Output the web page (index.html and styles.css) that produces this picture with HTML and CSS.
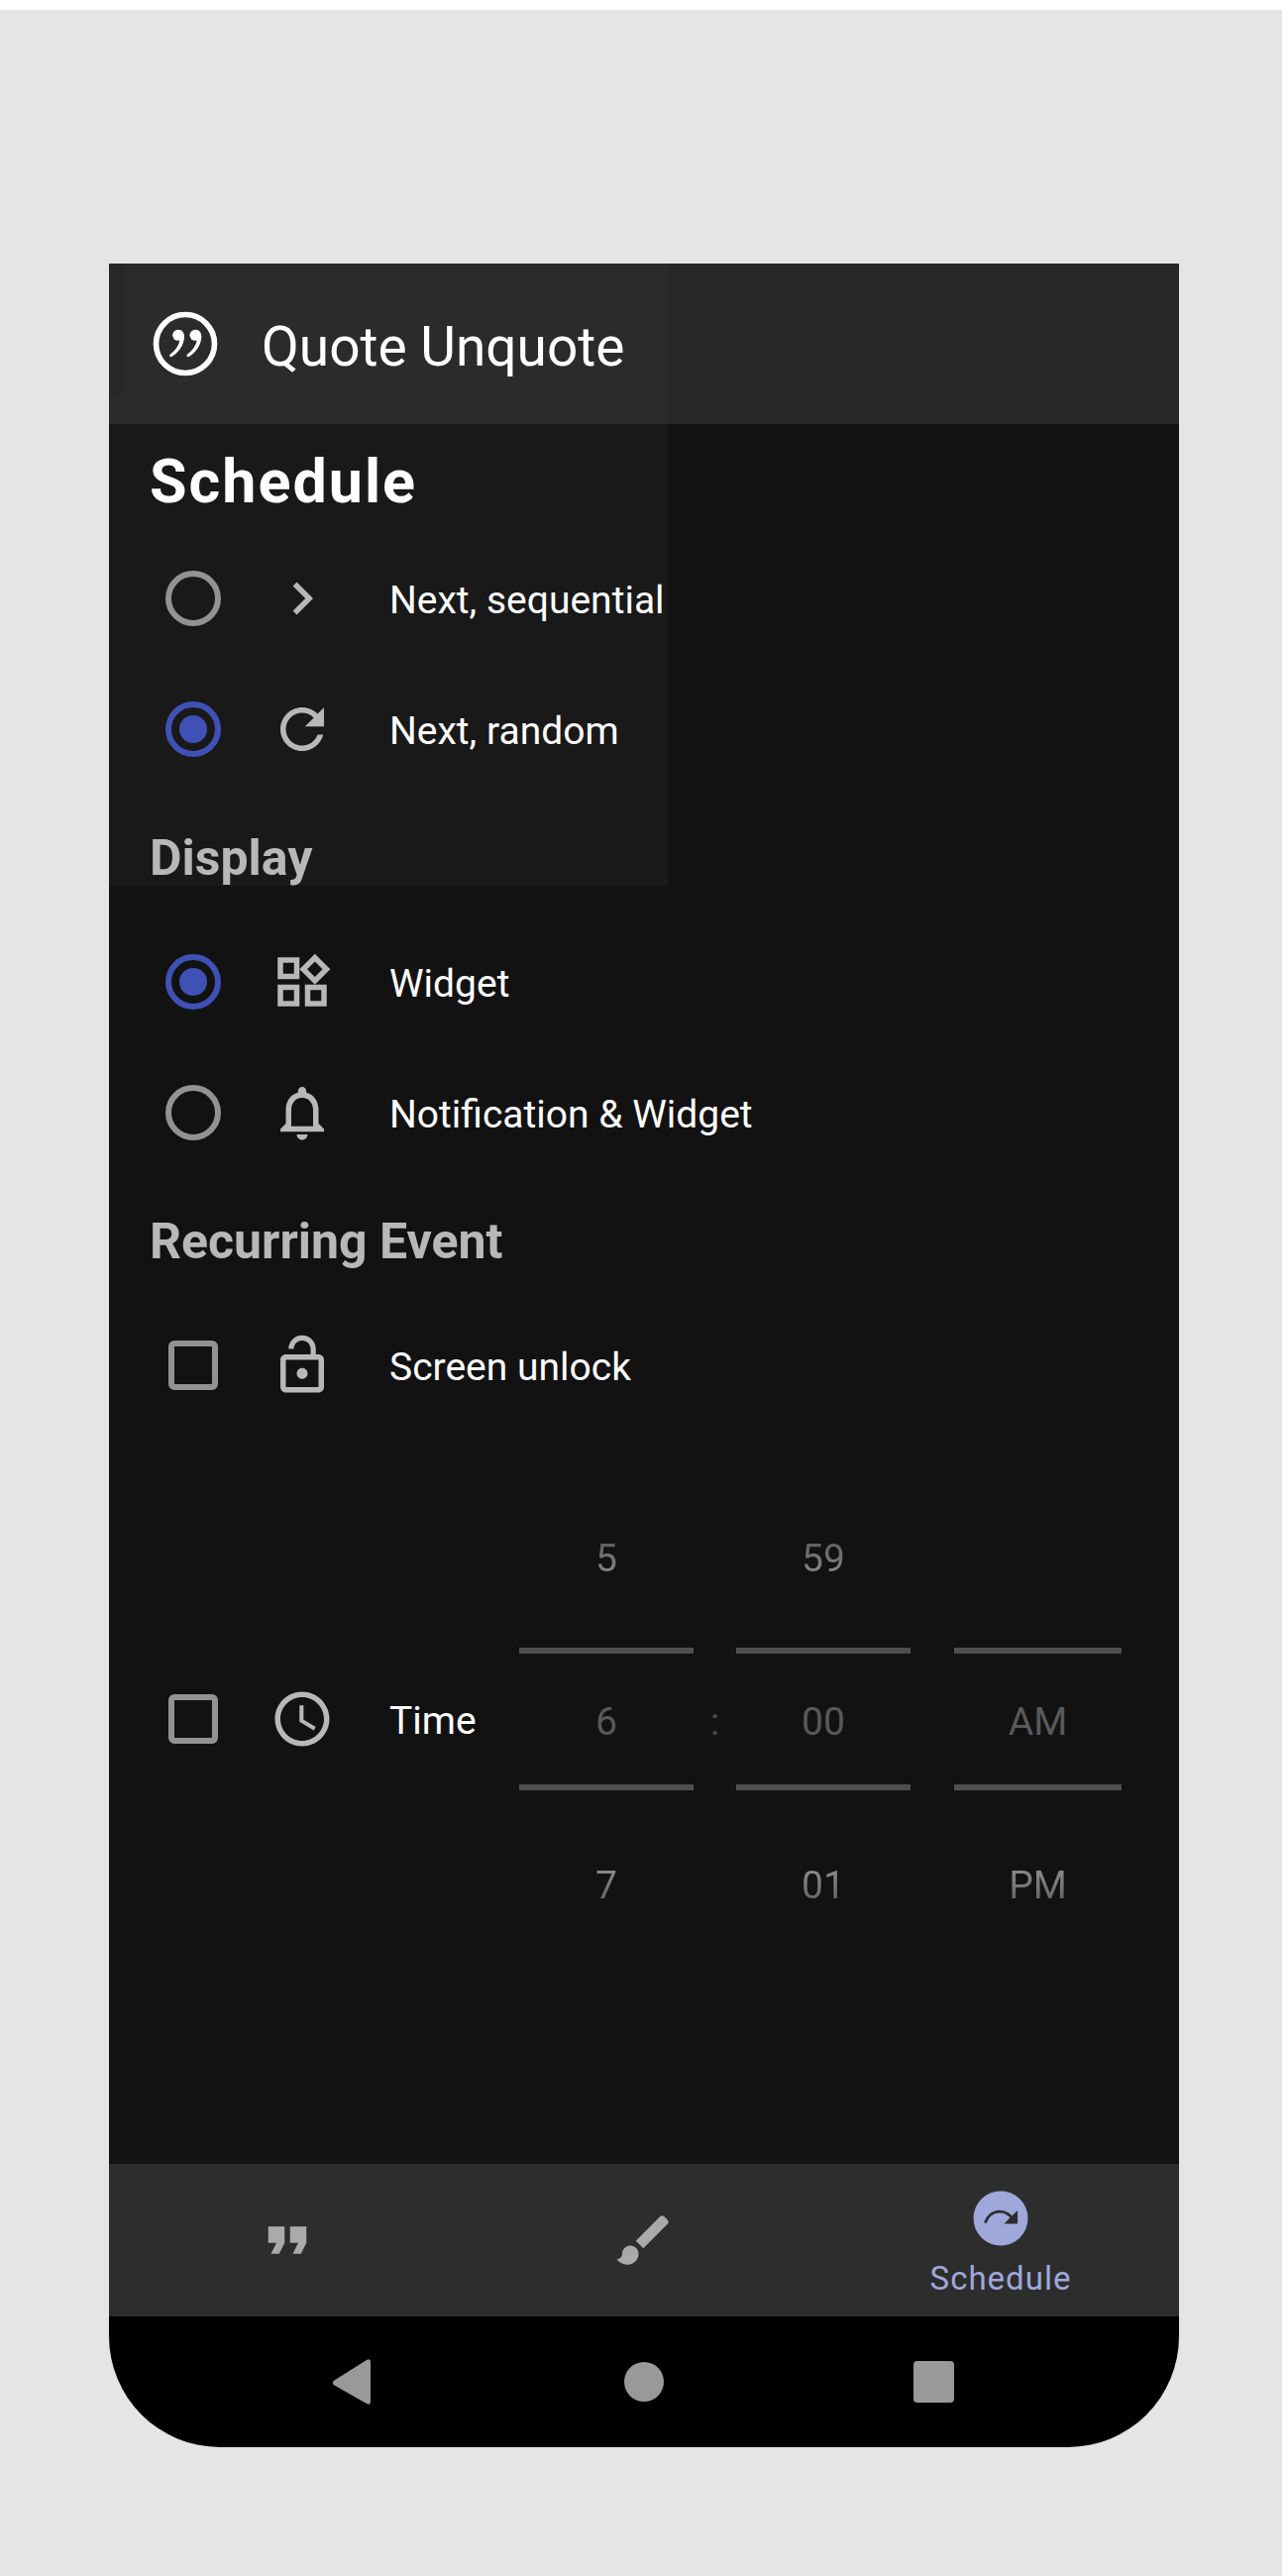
FILE: index.html
```html
<!DOCTYPE html>
<html lang="en">
<head>
<meta charset="utf-8">
<meta name="viewport" content="width=device-width, initial-scale=1">
<title>Quote Unquote</title>
<link rel="stylesheet" href="styles.css">
</head>
<body>
<div class="stage">
  <div class="phone">
    <header class="appbar">
      <svg class="logo" viewBox="42 42 198 198" aria-hidden="true">
        <circle cx="141" cy="141" r="88.500" fill="none" stroke="currentColor" stroke-width="17"/>
        <g id="comma" fill="currentColor">
          <circle cx="119" cy="115" r="16.500"/>
          <path d="M119 98.500C131 98.500 138 107 138 119C138 145 119 169 100 180C95 182 91 177 95 173C111 161 122 146 124 130Z"/>
        </g>
        <use href="#comma" x="52"/>
      </svg>
      <h1 class="title">Quote Unquote</h1>
    </header>

    <main class="content">
      <h2 class="heading">Schedule</h2>
      <label class="row">
        <input class="radio" type="radio" name="next">
        <svg class="icon" viewBox="0 0 24 24" aria-hidden="true"><path d="M10 6L8.590 7.410 13.170 12l-4.580 4.590L10 18l6-6z"/></svg>
        <span class="text">Next, sequential</span>
      </label>
      <label class="row">
        <input class="radio" type="radio" name="next" checked>
        <svg class="icon" viewBox="0 0 24 24" aria-hidden="true"><path d="M17.650 6.350C16.200 4.900 14.210 4 12 4c-4.420 0-7.990 3.580-7.990 8s3.570 8 7.990 8c3.730 0 6.840-2.550 7.730-6h-2.080c-.820 2.330-3.040 4-5.650 4-3.310 0-6-2.690-6-6s2.690-6 6-6c1.660 0 3.140.690 4.220 1.780L13 11h7V4l-2.350 2.350z"/></svg>
        <span class="text">Next, random</span>
      </label>

      <h3 class="subheading">Display</h3>
      <label class="row">
        <input class="radio" type="radio" name="display" checked>
        <svg class="icon" viewBox="0 0 24 24" aria-hidden="true"><path d="M16.660 4.520l2.830 2.830-2.830 2.830-2.830-2.830 2.830-2.830M9 5v4H5V5h4m10 10v4h-4v-4h4M9 15v4H5v-4h4m7.660-13.310L11 7.340 16.660 13l5.660-5.660-5.660-5.650zM11 3H3v8h8V3zm10 10h-8v8h8v-8zm-10 0H3v8h8v-8z"/></svg>
        <span class="text">Widget</span>
      </label>
      <label class="row">
        <input class="radio" type="radio" name="display">
        <svg class="icon" viewBox="0 0 24 24" aria-hidden="true"><path d="M12 22c1.100 0 2-.9 2-2h-4c0 1.100.9 2 2 2zm6-6v-5c0-3.070-1.630-5.640-4.500-6.320V4c0-.830-.670-1.500-1.500-1.500s-1.500.670-1.500 1.500v.680C7.640 5.360 6 7.920 6 11v5l-2 2v1h16v-1l-2-2zm-2 1H8v-6c0-2.480 1.510-4.500 4-4.500s4 2.020 4 4.500v6z"/></svg>
        <span class="text">Notification &amp; Widget</span>
      </label>

      <h3 class="subheading">Recurring Event</h3>
      <label class="row">
        <input class="check" type="checkbox">
        <svg class="icon" viewBox="0 0 24 24" aria-hidden="true"><path d="M12 17c1.100 0 2-.9 2-2s-.9-2-2-2-2 .9-2 2 .9 2 2 2zm6-9h-1V6c0-2.760-2.240-5-5-5S7 3.240 7 6h1.900c0-1.710 1.390-3.100 3.100-3.100 1.710 0 3.100 1.390 3.100 3.100v2H6c-1.100 0-2 .9-2 2v10c0 1.100.9 2 2 2h12c1.100 0 2-.9 2-2V10c0-1.100-.9-2-2-2zm0 12H6V10h12v10z"/></svg>
        <span class="text">Screen unlock</span>
      </label>
      <div class="time">
        <label class="row">
          <input class="check" type="checkbox">
          <svg class="icon" viewBox="0 0 24 24" aria-hidden="true"><path d="M11.990 2C6.470 2 2 6.480 2 12s4.470 10 9.990 10C17.520 22 22 17.520 22 12S17.520 2 11.990 2zM12 20c-4.420 0-8-3.580-8-8s3.580-8 8-8 8 3.580 8 8-3.580 8-8 8zm.5-13H11v6l5.250 3.150.750-1.230-4.500-2.670z"/></svg>
          <span class="text">Time</span>
        </label>
        <div class="picker">
          <div class="wheel">
            <button class="step before" disabled>5</button>
            <input class="value" type="text" value="6" aria-label="Hour" disabled>
            <button class="step after" disabled>7</button>
          </div>
          <span class="colon">:</span>
          <div class="wheel">
            <button class="step before" disabled>59</button>
            <input class="value" type="text" value="00" aria-label="Minute" disabled>
            <button class="step after" disabled>01</button>
          </div>
          <div class="wheel period">
            <span class="step"></span>
            <input class="value" type="text" value="AM" aria-label="AM or PM" disabled>
            <button class="step after" disabled>PM</button>
          </div>
        </div>
      </div>
    </main>

    <nav class="tabs">
      <a class="tab" href="#quotations" aria-label="Quotations">
        <svg class="icon" viewBox="0 0 24 24" aria-hidden="true"><path d="M6 17h3l2-4V7H5v6h3zm8 0h3l2-4V7h-6v6h3z"/></svg>
      </a>
      <a class="tab" href="#appearance" aria-label="Appearance">
        <svg class="icon" viewBox="0 0 24 24" aria-hidden="true"><path d="M7 14c-1.660 0-3 1.340-3 3 0 1.310-1.160 2-2 2 .920 1.220 2.490 2 4 2 2.210 0 4-1.790 4-4 0-1.660-1.340-3-3-3zm13.710-9.370l-1.340-1.340c-.390-.390-1.020-.390-1.410 0L9 12.250 11.750 15l8.960-8.960c.390-.390.390-1.020 0-1.410z"/></svg>
      </a>
      <a class="tab active" href="#schedule">
        <svg class="icon" viewBox="0 0 24 24" aria-hidden="true">
          <circle cx="12" cy="12" r="10"/>
          <path class="arc" d="M6.300 13.700C7.100 11.200 9.100 9.500 11.600 9.500C13.400 9.500 14.900 10.300 16.200 11.800"/>
          <path class="arrow" d="M18.200 9.100V14H13.200z"/>
        </svg>
        <span>Schedule</span>
      </a>
    </nav>

    <div class="system">
      <button class="key" aria-label="Back"><svg viewBox="0 0 42 46"><path d="M1.500 21.500L34 1Q38 -1 38 3V43Q38 47 34 45L1.500 26.500Q-2 24 1.500 21.500z"/></svg></button>
      <button class="key" aria-label="Home"><svg viewBox="0 0 42 46"><circle cx="21" cy="23" r="20"/></svg></button>
      <button class="key" aria-label="Recent apps"><svg viewBox="0 0 42 46"><rect y="2" width="41" height="42" rx="4"/></svg></button>
    </div>
  </div>
</div>
</body>
</html>
```
FILE: styles.css
```css
* {
  box-sizing: border-box;
}

body {
  margin: 0;
  background: #fff;
  color: #fff;
  font-family: Roboto, "Noto Sans", sans-serif;
}

.stage {
  min-height: calc(100vh - 10px);
  margin: 10px 6px 0 0;
  padding: 256px 104px 130px 110px;
  background: #e5e5e5;
}

.phone {
  overflow: hidden;
  border-radius: 0 0 112px 112px;
  background: #000;
}

.appbar {
  display: flex;
  align-items: center;
  gap: 44px;
  padding: 48px 44px;
  background:
    linear-gradient(#282828, #282828) 0 0 / 17px 135px no-repeat,
    linear-gradient(#2b2b2b, #2b2b2b) 0 0 / 564px 100% no-repeat,
    #282828;
}

.logo {
  width: 66px;
  height: 66px;
}

.title {
  margin: 0;
  padding-top: 6px;
  font-size: 55px;
  font-weight: 400;
  line-height: 60px;
}

.content {
  padding: 22px 0 191px;
  background:
    linear-gradient(#191919, #191919) 0 0 / 564px 466px no-repeat,
    #121212;
}

.heading {
  margin: 0 41px 16px;
  font-size: 61px;
  font-weight: 700;
  line-height: 72px;
  letter-spacing: 2px;
}

.subheading {
  margin: 34px 41px 29px;
  color: #b8b8b8;
  font-size: 50px;
  font-weight: 700;
  line-height: 60px;
}

.row {
  display: grid;
  grid-template-columns: 66px 66px auto;
  align-items: center;
  justify-content: start;
  column-gap: 44px;
  height: 132px;
  padding-left: 52px;
}

.radio,
.check {
  appearance: none;
  display: grid;
  place-items: center;
  justify-self: center;
  width: 56px;
  height: 56px;
  margin: 0;
  border: 6px solid #929292;
  border-radius: 50%;
}

.check {
  width: 50px;
  height: 50px;
  border-radius: 6px;
}

.radio:checked {
  border-color: #3f51b5;
}

.radio:checked::before {
  width: 28px;
  height: 28px;
  border-radius: 50%;
  background: #3f51b5;
  content: "";
}

.icon {
  width: 66px;
  height: 66px;
  color: #b8b8b8;
  fill: currentColor;
}

.text {
  padding: 4px 0 0 11px;
  font-size: 39px;
  line-height: 48px;
}

.time {
  display: flex;
  align-items: center;
  justify-content: space-between;
  padding: 33px 58px 0 0;
}

.picker {
  display: flex;
  align-items: center;
}

.wheel {
  display: flex;
  flex-direction: column;
  width: 176px;
}

.period {
  width: 169px;
  margin-left: 44px;
}

.step,
.value,
.colon {
  padding: 5px 0 0;
  border: 0;
  background: none;
  color: #595959;
  font: 400 39px/48px Roboto, "Noto Sans", sans-serif;
  text-align: center;
}

.step {
  height: 186px;
}

.before,
.after {
  background: linear-gradient(#585858 40%, #8c8c8c 62%);
  background-clip: text;
  color: transparent;
}

.after {
  background: linear-gradient(#8c8c8c 42%, #585858 66%);
  background-clip: text;
}

.value {
  width: 100%;
  height: 144px;
  border: solid #4f4f4f;
  border-width: 6px 0;
}

.colon {
  width: 43px;
  color: #474747;
}

.tabs {
  display: grid;
  grid-template-columns: repeat(3, 1fr);
  height: 154px;
  background: #2d2d2d;
}

.tab {
  display: flex;
  flex-direction: column;
  align-items: center;
  justify-content: center;
  color: #aaa;
  font-size: 33px;
  line-height: 40px;
  letter-spacing: 1px;
  text-decoration: none;
}

.tab .icon {
  color: inherit;
}

.active {
  gap: 8px;
  padding-top: 3px;
  color: #9fa8da;
}

.arc {
  fill: none;
  stroke: #2d2d2d;
}

.arrow {
  fill: #2d2d2d;
}

.system {
  display: flex;
  align-items: center;
  justify-content: center;
  gap: 251px;
  height: 132px;
}

.key {
  width: 42px;
  height: 46px;
  padding: 0;
  border: 0;
  background: none;
}

.key svg {
  display: block;
  fill: #999;
}
```
